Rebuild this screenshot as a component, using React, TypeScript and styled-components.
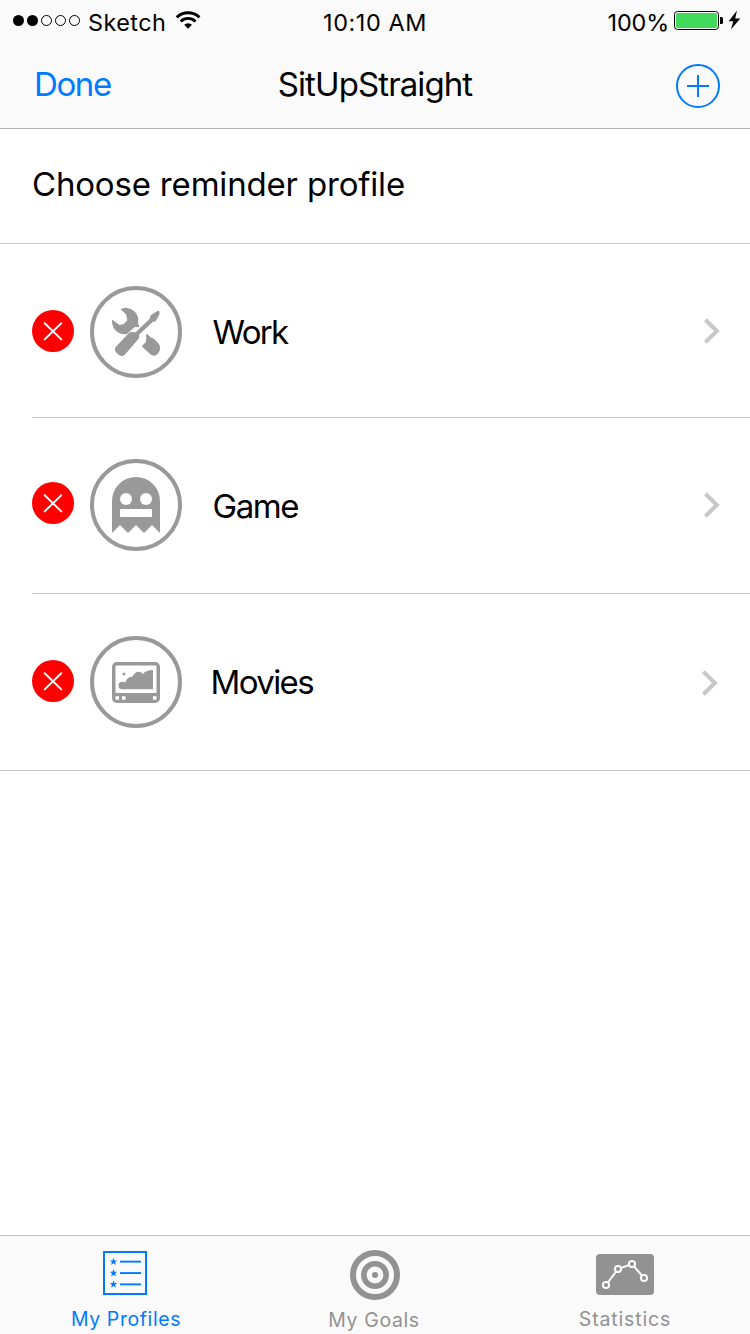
import React from "react";
import styled, { createGlobalStyle } from "styled-components";

const GlobalStyle = createGlobalStyle`
  * { box-sizing: border-box; }
  body { margin: 0; background: #fff; }
  svg { display: block; flex: none; }
`;

const BLUE = "#007aff";
const GRAY = "#999";

const Screen = styled.div`
  display: flex;
  flex-direction: column;
  width: 750px;
  height: 1334px;
  background: #fff;
  color: #000;
  font-family: Inter, "Liberation Sans", sans-serif;
  overflow: hidden;
`;

const TopBar = styled.header`
  height: 129px;
  background: #fafafa;
  border-bottom: 1px solid #b2b2b2;
`;

const StatusBar = styled.div`
  display: grid;
  grid-template-columns: 1fr auto 1fr;
  height: 40px;
  font-size: 23.4px;
  line-height: 29px;
`;

const StatusGroup = styled.div<{ $end?: boolean }>`
  display: flex;
  justify-content: ${(p) => (p.$end ? "flex-end" : "flex-start")};
  padding: ${(p) => (p.$end ? "0 9px 0 0" : "0 0 0 13px")};
`;

const StatusText = styled.span<{ $spacing: number; $width?: number }>`
  padding-top: 8px;
  width: ${(p) => (p.$width ? `${p.$width}px` : "auto")};
  letter-spacing: ${(p) => p.$spacing}px;
  white-space: nowrap;
`;

const NavBar = styled.nav`
  display: grid;
  grid-template-columns: 1fr auto 1fr;
  height: 88px;
  padding: 0 30px;
  font-size: 33px;
  line-height: 41px;
`;

const DoneButton = styled.button`
  justify-self: start;
  align-self: start;
  margin: 24px 0 0 4px;
  padding: 0;
  border: 0;
  background: none;
  color: ${BLUE};
  font: inherit;
  letter-spacing: -1.4px;
`;

const Title = styled.h1`
  margin: 24px 0 0;
  font: inherit;
  letter-spacing: -0.9px;
`;

const AddButton = styled.button`
  justify-self: end;
  align-self: start;
  margin: 24px 0 0;
  padding: 0;
  border: 0;
  background: none;
`;

const SectionTitle = styled.h2`
  height: 115px;
  margin: 0;
  padding: 35px 0 0 32px;
  border-bottom: 1px solid #c8c7cc;
  font-size: 33px;
  font-weight: 400;
  line-height: 41px;
  letter-spacing: -0.18px;
`;

const List = styled.main`
  flex: 1;
`;

const Row = styled.div<{ $height: number; $last?: boolean }>`
  display: flex;
  align-items: flex-start;
  height: ${(p) => p.$height}px;
  margin-left: ${(p) => (p.$last ? 0 : 32)}px;
  padding-left: ${(p) => (p.$last ? 32 : 0)}px;
  border-bottom: 1px solid #c8c7cc;
`;

const DeleteButton = styled.button<{ $top: number }>`
  margin: ${(p) => p.$top}px 16px 0 0;
  padding: 0;
  border: 0;
  background: none;
`;

const ProfileBadge = styled.div<{ $top: number }>`
  margin-top: ${(p) => p.$top}px;
`;

const ProfileName = styled.span<{ $left: number; $spacing: number }>`
  flex: 1;
  margin: 68px 0 0 ${(p) => p.$left}px;
  font-size: 33px;
  line-height: 41px;
  letter-spacing: ${(p) => p.$spacing}px;
`;

const Disclosure = styled.div<{ $top: number; $right: number }>`
  margin: ${(p) => p.$top}px ${(p) => p.$right}px 0 0;
`;

const TabBar = styled.footer`
  display: grid;
  grid-template-columns: repeat(3, 250px);
  height: 99px;
  background: #fafafa;
  border-top: 1px solid #c2c2c4;
`;

const Tab = styled.div<{ $active?: boolean }>`
  display: flex;
  flex-direction: column;
  align-items: center;
  color: ${(p) => (p.$active ? BLUE : "#929292")};
`;

const TabIcon = styled.div`
  display: flex;
  height: 71px;
  padding-top: 14px;
`;

const TabLabel = styled.span<{ $spacing: number; $shift?: number; $drop?: number }>`
  padding-left: ${(p) => Math.max(p.$shift ?? 0, 0)}px;
  padding-right: ${(p) => Math.max(-(p.$shift ?? 0), 0)}px;
  padding-top: ${(p) => p.$drop ?? 0}px;
  font-size: 19.5px;
  line-height: 24px;
  letter-spacing: ${(p) => p.$spacing}px;
  white-space: nowrap;
`;

const SignalDots = () => (
  <svg width="75" height="40" viewBox="13 0 75 40">
    {[18.5, 32.5, 46.5, 60.5, 74.5].map((cx, i) => (
      <circle key={cx} cx={cx} cy="20.5" r={i < 2 ? 5.5 : 5} fill={i < 2 ? "#000" : "none"} stroke={i < 2 ? "none" : "#000"} />
    ))}
  </svg>
);

const Wifi = () => (
  <svg width="28" height="40" viewBox="0 0 28 40" fill="none" stroke="#000">
    <path d="M1.8 17.4a16.2 16.2 0 0 1 22.6 0" strokeWidth="3" />
    <path d="M5.7 21.4a10.8 10.8 0 0 1 14.8 0" strokeWidth="2.7" />
    <path d="M13.1 28.8L9.2 24.8a5.6 5.6 0 0 1 7.8 0z" fill="#000" stroke="none" />
  </svg>
);

const Battery = () => (
  <svg width="67" height="40" viewBox="674 0 67 40">
    <rect x="674.5" y="11.5" width="44" height="18" rx="3" fill="none" stroke="#000" />
    <rect x="676" y="13" width="41" height="15" rx="1.5" fill="#43d95c" />
    <path d="M720 17h1.5q1.5 0 1.5 1.5v4q0 1.5-1.5 1.5H720z" />
    <path d="M737 10.5L728.7 21.2H733.3L730.9 29.5L740.3 18.6H735.2Z" />
  </svg>
);

const Plus = () => (
  <svg width="44" height="44" viewBox="0 0 44 44" fill="none" stroke={BLUE} strokeWidth="2">
    <circle cx="22" cy="22" r="21" />
    <path d="M11 22h22M22 11v22" />
  </svg>
);

const DeleteIcon = () => (
  <svg width="42" height="42" viewBox="0 0 42 42">
    <circle cx="21" cy="21" r="21" fill="#f00" />
    <path d="M12.7 13.2l16.6 16.2M29.3 13.2L12.7 29.4" stroke="#fff" strokeWidth="1.9" strokeLinecap="round" />
  </svg>
);

const Ring = ({ children }: { children: React.ReactNode }) => (
  <svg width="92" height="92" viewBox="0 0 92 92">
    <circle cx="46" cy="46" r="44" fill="none" stroke={GRAY} strokeWidth="4" />
    {children}
  </svg>
);

const Tools = () => (
  <g transform="translate(-70 -16) scale(.33333)" fill={GRAY}>
    <path d="M302 118Q308 113 318 113.5Q333 115 343 124Q355 135 355 152L354 160L358 168L356 172L345 171L337 177L321 192Q306 195 292 186Q275 174 276 151L278 150L299 165L311 162L322 151L318 133Z" />
    <path d="M417 123L419 128L418 134L407 154L398 156L357 194L358 199L356 206L319 249Q313 259 305 258Q299 258 294 253L288 247Q281 238 289 229L326 190L332 186L347 187L389 146L392 136L412 123Z" />
    <path d="M378 194L382 192L393 203L402 206L415 220Q423 231 419 242Q412 257 400 257Q396 257 391 253L365 229L377 217L379 207Z" />
  </g>
);

const Ghost = () => (
  <g>
    <path fill={GRAY} d="M22 74V42a24 24 0 0 1 48 0v32l-8-8-8 8-8-8-8 8-8-8z" />
    <circle cx="36" cy="40" r="6" fill="#fff" />
    <circle cx="56" cy="40" r="6" fill="#fff" />
    <rect x="30" y="50" width="32" height="8" rx="1" fill="#fff" />
  </g>
);

const MovieScreen = () => (
  <g>
    <rect x="22" y="26" width="48" height="41" rx="5" fill={GRAY} />
    <rect x="25.5" y="29.5" width="41" height="27.5" rx="1" fill="#fff" />
    <circle cx="34" cy="38" r="1.5" fill={GRAY} />
    <path fill={GRAY} d="M63 34v19.3H32.3a3.7 3.7 0 0 1 0-7.6c1.3 0 2.3.3 3.1.8c1-3.5 3-5.7 6.7-5.8c1.5-2.3 2.9-3.8 4.3-4.5c2.8-.8 4.9-.2 6.5 1.7c2-2.500 5.500-3.900 10.100-3.900z" />
    <path fill="#fff" d="M25.5 60.3h3.500v3.500h-3.500zM32 60.300h3.500v3.500H32zM63 60.300h3.500v3.500H63z" />
  </g>
);

const Chevron = () => (
  <svg width="18" height="28" viewBox="0 0 18 28" fill="none" stroke="#c7c7cc" strokeWidth="4">
    <path d="M2.4 2.7L13.9 14L2.4 25.3" />
  </svg>
);

const STAR = "M0-3.9L1-1.2L3.7-1.2L1.6.5L2.4 3.4L0 1.7L-2.4 3.4L-1.6.5L-3.7-1.2L-1-1.2Z";

const ProfilesIcon = () => (
  <svg width="44" height="48" viewBox="0 0 44 48">
    <rect x="1" y="2" width="42" height="42" fill="none" stroke={BLUE} strokeWidth="2" />
    {[11.6, 23, 34.3].map((y) => (
      <g key={y} fill={BLUE}>
        <path d={STAR} transform={`translate(10.5 ${y})`} />
        <rect x="17" y={y - 0.9} width="21" height="1.9" />
      </g>
    ))}
  </svg>
);

const GoalsIcon = () => (
  <svg width="50" height="50" viewBox="0 0 50 50" fill="none" stroke="#929292">
    <circle cx="25" cy="25" r="22" strokeWidth="6" />
    <circle cx="25" cy="25" r="11.2" strokeWidth="5.6" />
    <circle cx="25" cy="25" r="3" fill="#929292" stroke="none" />
  </svg>
);

const StatsIcon = () => (
  <svg width="58" height="50" viewBox="0 0 58 50">
    <rect y="4" width="58" height="41" rx="4" fill="#929292" />
    <g fill="#929292" stroke="#fafafa" strokeWidth="2">
      <path d="M10 35L22 19L36 14L48 28" fill="none" />
      <circle cx="10" cy="35" r="3.1" />
      <circle cx="22" cy="19" r="3.1" />
      <circle cx="36" cy="14" r="3.1" />
      <circle cx="48" cy="28" r="3.1" />
    </g>
  </svg>
);

const profiles = [
  { name: "Work", icon: <Tools />, height: 174, del: 66, badge: 42, left: 30.5, spacing: -1.7, chev: 73, right: 29 },
  { name: "Game", icon: <Ghost />, height: 176, del: 64, badge: 41, left: 30.5, spacing: -1.4, chev: 73, right: 29 },
  { name: "Movies", icon: <MovieScreen />, height: 177, del: 66, badge: 42, left: 28.5, spacing: -1.6, chev: 75, right: 31 },
];

export default function App() {
  return (
    <Screen>
      <GlobalStyle />
      <TopBar>
        <StatusBar>
          <StatusGroup>
            <SignalDots />
            <StatusText $spacing={0.45} $width={87}>Sketch</StatusText>
            <Wifi />
          </StatusGroup>
          <StatusText $spacing={0.6}>10:10 AM</StatusText>
          <StatusGroup $end>
            <StatusText $spacing={-0.1} $width={66.5}>100%</StatusText>
            <Battery />
          </StatusGroup>
        </StatusBar>
        <NavBar>
          <DoneButton>Done</DoneButton>
          <Title>SitUpStraight</Title>
          <AddButton aria-label="Add profile">
            <Plus />
          </AddButton>
        </NavBar>
      </TopBar>
      <SectionTitle>Choose reminder profile</SectionTitle>
      <List>
        {profiles.map((p, i) => (
          <Row key={p.name} $height={p.height} $last={i === profiles.length - 1}>
            <DeleteButton $top={p.del} aria-label={`Delete ${p.name}`}>
              <DeleteIcon />
            </DeleteButton>
            <ProfileBadge $top={p.badge}>
              <Ring>{p.icon}</Ring>
            </ProfileBadge>
            <ProfileName $left={p.left} $spacing={p.spacing}>
              {p.name}
            </ProfileName>
            <Disclosure $top={p.chev} $right={p.right}>
              <Chevron />
            </Disclosure>
          </Row>
        ))}
      </List>
      <TabBar>
        <Tab $active>
          <TabIcon>
            <ProfilesIcon />
          </TabIcon>
          <TabLabel $spacing={0.6} $shift={2}>My Profiles</TabLabel>
        </Tab>
        <Tab>
          <TabIcon>
            <GoalsIcon />
          </TabIcon>
          <TabLabel $spacing={0.6} $shift={-2} $drop={1}>My Goals</TabLabel>
        </Tab>
        <Tab>
          <TabIcon>
            <StatsIcon />
          </TabIcon>
          <TabLabel $spacing={0.85}>Statistics</TabLabel>
        </Tab>
      </TabBar>
    </Screen>
  );
}
